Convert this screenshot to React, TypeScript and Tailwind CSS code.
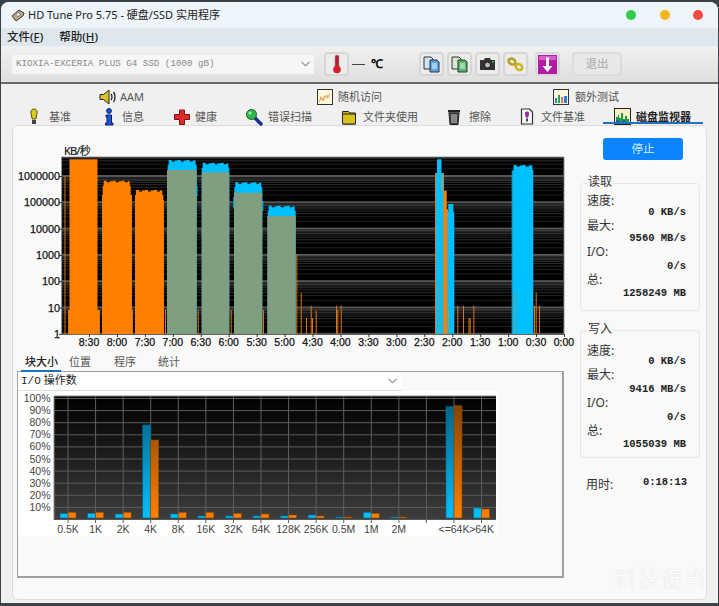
import React from 'react'

const cjk = '"Noto Sans", "Noto Sans CJK SC", sans-serif'

// ---- small icons, all drawn on a 16x16 grid ----
const Bulb = () => (
  <svg width="16" height="18" viewBox="0 0 16 18">
    <path d="M8 1c2.600 0 3.400 2 3 4.500L9.800 11H6.200L5 5.500C4.600 3 5.400 1 8 1z" fill="#d9c81e" stroke="#55500a" />
    <rect x="6" y="12" width="4" height="4" fill="#444" />
  </svg>
)
const Info = () => (
  <svg width="16" height="18" viewBox="0 0 16 18">
    <circle cx="8" cy="3" r="2.400" fill="#1c54d8" stroke="#0b1f60" />
    <path d="M5 7h5.500v8H12v2H4.500v-2H6V9H5z" fill="#1c54d8" stroke="#0b1f60" />
  </svg>
)
const Cross = () => (
  <svg width="16" height="16" viewBox="0 0 16 16">
    <path d="M5.500 1h5v4.500H15.500v5H10.500V15.500h-5V10.500H.5v-5h5z" fill="#df2a2a" stroke="#7a1414" />
  </svg>
)
const Magnifier = () => (
  <svg width="18" height="18" viewBox="0 0 18 18">
    <path d="M9 9l7 7" stroke="#1a2f8a" strokeWidth="3.500" strokeLinecap="round" />
    <circle cx="6.500" cy="6.500" r="5" fill="#2fb84a" stroke="#1b5f28" />
    <circle cx="5" cy="5" r="1.500" fill="#a8efb4" />
  </svg>
)
const Folder = () => (
  <svg width="16" height="16" viewBox="0 0 16 16">
    <path d="M1.500 4V2.500h6L9 4h5.500v11h-13z" fill="#cdb31a" stroke="#222" />
    <rect x="1.500" y="5" width="13" height="10" rx="1" fill="#d8c220" stroke="#222" />
  </svg>
)
const Trash = () => (
  <svg width="14" height="16" viewBox="0 0 14 16">
    <rect x="1" y="1" width="12" height="2.500" fill="#222" />
    <path d="M2 4h10l-1 11.500H3z" fill="#444" stroke="#222" />
    <path d="M5 5v9M7 5v9M9 5v9" stroke="#ccc" />
  </svg>
)
const FileBench = () => (
  <svg width="16" height="17" viewBox="0 0 16 17">
    <path d="M2.500 1h8l3 3v12h-11z" fill="#f6f6f6" stroke="#333" strokeWidth="1.200" />
    <path d="M8 3.500c1.700 0 2.300 1.300 2 2.800L9.100 9.800H6.900L6 6.300C5.700 4.800 6.300 3.500 8 3.500z" fill="#9c2aa8" />
    <rect x="7" y="10.500" width="2" height="3" fill="#444" />
  </svg>
)
const Speaker = () => (
  <svg width="18" height="16" viewBox="0 0 18 16">
    <path d="M1 5.500h3.500L10 1v14l-5.500-4.500H1z" fill="#d8c426" stroke="#222" />
    <path d="M12 5c1.300 1.500 1.300 4.500 0 6M14.500 3c2 2.700 2 7.300 0 10" fill="none" stroke="#222" strokeWidth="1.300" />
  </svg>
)
const ChartIcon = ({ alt }: { alt?: boolean }) => (
  <svg width="16" height="16" viewBox="0 0 16 16">
    <rect x=".5" y=".5" width="15" height="15" fill="#fdf8dc" stroke="#333" />
    {alt ? (
      <>
        <path d="M2 13l2-4 2 3 2-5 2 2 3-4" fill="none" stroke="#e9a020" />
        <path d="M3 8l3 2 3-4 4 3" fill="none" stroke="#e5554d" strokeDasharray="1 1" />
      </>
    ) : (
      <>
        <rect x="2" y="9" width="2" height="5" fill="#2f7de0" />
        <rect x="5" y="6" width="2" height="8" fill="#2aa84a" />
        <rect x="8" y="8" width="2" height="6" fill="#e5667a" />
        <rect x="11" y="7" width="3" height="7" fill="#2f7de0" />
      </>
    )}
  </svg>
)
const MonitorIcon = () => (
  <svg width="17" height="17" viewBox="0 0 17 17">
    <rect x=".5" y=".5" width="16" height="16" fill="#f6f1c4" stroke="#222" />
    <path d="M2 15V9h2v-2h1v3h2V5h2v6h2V8h2v3h2v4z" fill="#1f9a3c" />
    <path d="M2 15v-3h3v3zM9 15v-3h2v3z" fill="#1c54d8" />
  </svg>
)
const Thermo = () => (
  <svg width="10" height="20" viewBox="0 0 10 20">
    <rect x="3" y="1" width="4" height="13" rx="2" fill="#b5202a" stroke="#8d9aa5" strokeWidth=".6" />
    <circle cx="5" cy="15.500" r="3.800" fill="#d8202a" />
  </svg>
)
const Copy = ({ green }: { green?: boolean }) => (
  <svg width="17" height="17" viewBox="0 0 17 17">
    <path d="M1 1h7l2 2v10H1z" fill={green ? '#d8e8d0' : '#cfe2f6'} stroke="#333" />
    <path d="M7 4h7l2 2v10H7z" fill={green ? '#55b868' : '#5aa2e8'} stroke="#333" />
    <path d="M9 8h5M9 10h5M9 12h5" stroke="#eef6ff" />
  </svg>
)
const Camera = () => (
  <svg width="17" height="14" viewBox="0 0 17 14">
    <path d="M1 3h4l1-2h5l1 2h4v10H1z" fill="#333" />
    <circle cx="8.500" cy="8" r="3" fill="#bbb" stroke="#111" />
    <rect x="13" y="4" width="2" height="1.500" fill="#35c24f" />
  </svg>
)
const Chain = () => (
  <svg width="17" height="15" viewBox="0 0 17 15">
    <ellipse cx="5" cy="4.500" rx="3.500" ry="2.800" transform="rotate(35 5 4.500)" fill="none" stroke="#b3a01c" strokeWidth="2.600" />
    <ellipse cx="12" cy="10" rx="3.500" ry="2.800" transform="rotate(35 12 10)" fill="none" stroke="#c9b422" strokeWidth="2.600" />
  </svg>
)
const DownArrow = () => (
  <svg width="19" height="19" viewBox="0 0 19 19">
    <rect width="19" height="19" fill="#b21aa8" />
    <rect x="1" y="1" width="17" height="4" fill="#d65ecb" />
    <path d="M8 2.500h3V11h3.500l-5 6-5-6H8z" fill="#fff" />
  </svg>
)
const Chevron = () => (
  <svg width="9" height="6" viewBox="0 0 9 6">
    <path d="M.5.800l4 4 4-4" fill="none" stroke="#8a8a8a" strokeWidth="1.100" />
  </svg>
)

const ToolBtn = ({ children, className }: { children: React.ReactNode; className?: string }) => (
  <div className={`flex h-[24px] w-[25px] items-center justify-center rounded-[4px] border-2 border-[#d6d6d6] bg-[#ececec] ${className ?? ''}`}>
    {children}
  </div>
)

const Tab = ({ icon, label, gap, className, active }: { icon: React.ReactNode; label: string; gap: string; className: string; active?: boolean }) => (
  <div className={`flex shrink-0 items-center ${gap} ${className}`}>
    {icon}
    <span className={`whitespace-nowrap text-[11px] leading-[16px] ${active ? 'font-bold text-[#222]' : 'text-[#555]'}`}>{label}</span>
  </div>
)

// ---- disk monitor chart, drawn in page coordinates ----
const Y1M = 176
const DEC = 26.3
const BOTTOM = 334

const jag = (x0: number, x1: number, top: number) => {
  let d = `M${x0} ${BOTTOM}V${top + 5}H${x0 + 1}`
  let i = 0
  for (let x = x0 + 1; x < x1 - 1; x += 3) {
    d += `V${top + (i % 3 === 1 ? 1.500 : i % 3 === 2 ? 0.500 : 0)}H${Math.min(x + 3, x1 - 1)}`
    i++
  }
  return d + `V${top + 5}H${x1}V${BOTTOM}Z`
}

const xLabels = ['8:30', '8:00', '7:30', '7:00', '6:30', '6:00', '5:30', '5:00', '4:30', '4:00', '3:30', '3:00', '2:30', '2:00', '1:30', '1:00', '0:30', '0:00']
const yLabels = ['1000000', '100000', '10000', '1000', '100', '10', '1']
const spikes: [number, number][] = [
  [64.5, 176], [68, 310], [99, 310], [132, 310], [165, 310], [197.7, 310], [230.7, 310], [263, 310], [296.300, 254],
  [300.7, 292.7], [306, 318], [310.7, 305.7], [312, 318], [315.7, 310.7], [336, 305.7], [337.3, 310], [340.7, 305.7],
  [457.3, 305.7], [463, 305.7], [468.5, 318], [469.7, 318], [473.3, 305.7], [534, 305.7], [535.7, 292.7], [539, 305.7],
]

const MonitorChart = () => {
  const minors: { y: number; c: string }[] = []
  for (let d = 0; d < 7; d++) {
    for (let k = 2; k < 10; k++) {
      const y = BOTTOM - d * DEC - Math.log10(k) * DEC
      if (y > 157) minors.push({ y, c: k > 6 ? '#3a3a3a' : k > 3 ? '#2c2c2c' : '#222222' })
    }
  }
  return (
    <svg width="560" height="211" viewBox="18 141 560 211" className="block" fontFamily='"Liberation Sans", sans-serif'>
      <rect x="62" y="157" width="502" height="177" fill="#000" />
      <path d="M62 157H564V334" fill="none" stroke="#9a9a9a" />
      <path d="M62 157V334H564" fill="none" stroke="#222" />
      {minors.map((m, i) => (
        <rect key={i} x="62" y={m.y} width="502" height="1" fill={m.c} />
      ))}
      {yLabels.map((_, i) => (
        <rect key={i} x="62" y={Y1M + i * DEC - 1} width="502" height="2" fill="#565656" />
      ))}

      {/* orange read bars */}
      <rect x="68" y="310" width="31" height="24" fill="#ff8000" />
      <rect x="69.500" y="159.300" width="28" height="175" fill="#ff8000" />
      <path d={jag(102.7, 130.7, 180.7)} fill="#ff8000" />
      <rect x="102" y="195" width="30" height="139" fill="#ff8000" />
      <path d={jag(135, 163.3, 190)} fill="#ff8000" />
      <rect x="135" y="200" width="29" height="134" fill="#ff8000" />

      {/* blue + mixed bars */}
      <path d={jag(167.7, 196.7, 160)} fill="#00bfff" />
      <path d={jag(201.7, 229.3, 162.7)} fill="#00bfff" />
      <path d={jag(234.3, 262.3, 182.3)} fill="#00bfff" />
      <path d={jag(267.7, 295.7, 205.7)} fill="#00bfff" />
      <rect x="167" y="170" width="29.700" height="164" fill="#7f9f80" />
      <rect x="201.700" y="172.300" width="27.600" height="161.700" fill="#7f9f80" />
      <rect x="234" y="192.700" width="28.300" height="141.300" fill="#7f9f80" />
      <rect x="267.300" y="216" width="28.400" height="118" fill="#7f9f80" />
      <rect x="196.500" y="186" width="1" height="10" fill="#00bfff" />
      <rect x="233.300" y="197" width="1" height="11" fill="#00bfff" />
      <rect x="262.300" y="201" width="1" height="10" fill="#00bfff" />

      {/* 2:00 burst */}
      <rect x="435" y="173" width="1" height="161" fill="#d98028" />
      <rect x="436" y="173" width="8" height="161" fill="#00bfff" />
      <rect x="437" y="159.300" width="4.500" height="20" fill="#00bfff" />
      <rect x="441.500" y="173" width="1.500" height="18" fill="#e08a30" />
      <rect x="443.300" y="190.700" width="3.400" height="143.300" fill="#ff8000" />
      <rect x="444" y="209.300" width="4" height="124.700" fill="#ff8000" />
      <rect x="447.300" y="212" width="7" height="122" fill="#00bfff" />
      <rect x="448.300" y="204" width="5" height="10" fill="#00bfff" />
      <rect x="438" y="283" width="1" height="51" fill="#7f9f80" />
      <rect x="448" y="310" width="1" height="24" fill="#7f9f80" />

      {/* 1:00-0:30 block */}
      <path d={jag(512.6, 533.3, 165)} fill="#00bfff" />
      <rect x="511.700" y="170.700" width="1" height="163" fill="#00bfff" />
      <rect x="514" y="292.700" width="1" height="41" fill="#7f9f80" />

      {spikes.map(([x, top], i) => (
        <rect key={i} x={x} y={top} width="1" height={BOTTOM - top} fill="#d9760c" />
      ))}

      {/* axes */}
      {yLabels.map((l, i) => (
        <g key={l}>
          <rect x="59" y={Y1M + i * DEC} width="3" height="1" fill="#333" />
          <text x="60" y={Y1M + i * DEC + 4} textAnchor="end" fontSize="10.800" fill="#111" stroke="#111" strokeWidth=".25">{l}</text>
        </g>
      ))}
      {xLabels.map((l, i) => (
        <g key={l}>
          <rect x={89 + i * 27.94} y="334" width="1" height="3" fill="#333" />
          <text x={89 + i * 27.94} y="346" textAnchor="middle" fontSize="10.500" fill="#111" stroke="#111" strokeWidth=".25">{l}</text>
        </g>
      ))}
      <text x="64" y="155" fontSize="11" fill="#111" stroke="#111" strokeWidth=".15" letterSpacing="-.8" fontFamily={cjk}>KB/秒</text>
    </svg>
  )
}

// ---- block size histogram ----
const sizes: [string, number, number][] = [
  ['0.5K', 513.3, 512.3], ['1K', 513.3, 512.3], ['2K', 514, 512.3], ['4K', 425, 440],
  ['8K', 514, 512.3], ['16K', 516, 512.3], ['32K', 516, 513.3], ['64K', 516, 514],
  ['128K', 516, 515], ['256K', 515, 516], ['0.5M', 517, 517], ['1M', 512.3, 513.3],
  ['2M', 517, 517], ['', 518, 518], ['<=64K', 406.7, 405.7], ['>64K', 508, 509],
]

const BlockChart = () => (
  <svg width="479" height="145" viewBox="18 391 479 145" className="block bg-white" fontFamily='"Liberation Sans", sans-serif'>
    <defs>
      <linearGradient id="plotBg" x1="0" y1="0" x2="0" y2="1">
        <stop offset="0" stopColor="#000" />
        <stop offset="1" stopColor="#3d3d3d" />
      </linearGradient>
      <linearGradient id="blueBar" gradientUnits="userSpaceOnUse" x1="0" y1="400" x2="0" y2="518">
        <stop offset="0" stopColor="#005f80" />
        <stop offset="1" stopColor="#00bfff" />
      </linearGradient>
      <linearGradient id="orangeBar" gradientUnits="userSpaceOnUse" x1="0" y1="400" x2="0" y2="518">
        <stop offset="0" stopColor="#804000" />
        <stop offset="1" stopColor="#ff8000" />
      </linearGradient>
    </defs>
    <rect x="54" y="396" width="442" height="124" fill="url(#plotBg)" />
    <path d="M54 396H496M54 396V520" stroke="#8a8a8a" fill="none" />
    {Array.from({ length: 10 }, (_, i) => (
      <g key={i}>
        <rect x="54" y={398 + i * 12.1} width="442" height="1" fill="#5c5c5c" />
        <text x="50.500" y={402 + i * 12.1} textAnchor="end" fontSize="10.500" fill="#444">{100 - i * 10}%</text>
      </g>
    ))}
    {sizes.map(([l, b, o], i) => {
      const x = 68 + i * 27.57
      return (
        <g key={i}>
          <rect x={x - 0.5} y="396" width="1" height="127" fill="#5f5f5f" />
          {l && (
            <>
              <rect x={x - 8} y={b} width="8" height={518 - b} fill="url(#blueBar)" stroke="#00668a" strokeWidth=".6" />
              <rect x={x} y={o} width="8" height={518 - o} fill="url(#orangeBar)" stroke="#8a4500" strokeWidth=".6" />
              <text x={x} y="533" textAnchor="middle" fontSize="10.500" fill="#444">{l}</text>
            </>
          )}
        </g>
      )
    })}
    <rect x="54" y="519" width="442" height="1" fill="#555" />
  </svg>
)

const Stat = ({ label, value, shift }: { label: string; value: string; shift: string }) => (
  <>
    <div className="h-[14px] text-[12px] leading-[14px] text-[#333]">{label}</div>
    <div className={`h-[14px] whitespace-pre pr-[13px] text-right font-['Liberation_Mono',monospace] text-[10.500px] font-bold leading-[14px] text-[#222] ${shift}`}>{value}</div>
  </>
)

const Group = ({ title, rows, className }: { title: string; rows: [string, string, string][]; className: string }) => (
  <div className={`relative h-[128px] w-[120px] rounded-[4px] border border-[#e6e6e6] pl-[6px] ${className}`}>
    <span className="absolute left-[6px] top-[-11px] bg-[#f9f9f9] px-[1px] text-[12px] leading-[18px] text-[#333]">{title}</span>
    {rows.map(([l, v, s]) => (
      <Stat key={l} label={l} value={v} shift={s} />
    ))}
  </div>
)

export default function App() {
  return (
    <div className="h-[606px] w-[719px] overflow-hidden bg-[#3b4146] pl-[1px] pt-[2px]" style={{ fontFamily: cjk }}>
      <div className="relative h-[601px] w-[717px] overflow-hidden rounded-t-[8px] bg-[#f0f0f0]">
        {/* title bar */}
        <div className="flex h-[26px] items-center bg-[#eef5fa] pl-[10px] pr-[15px]">
          <svg width="14" height="13" viewBox="0 0 14 13" className="mr-[3px]">
            <path d="M1 7l7-6 5 3-1 3-7 5z" fill="#b9aa80" stroke="#3a3a3a" />
            <circle cx="7" cy="5.500" r="2" fill="#e8e8e8" stroke="#555" strokeWidth=".6" />
          </svg>
          <span className="text-[11px] leading-[16px] text-[#222]">HD Tune Pro 5.75 - 硬盘/SSD 实用程序</span>
          <div className="ml-auto flex gap-[23.500px]">
            <span className="h-[10px] w-[10px] rounded-full bg-[#2ecc47]" />
            <span className="h-[10px] w-[10px] rounded-full bg-[#f6b619]" />
            <span className="h-[10px] w-[10px] rounded-full bg-[#f5483f]" />
          </div>
        </div>
        {/* menu */}
        <div className="flex h-[18px] items-center gap-[16px] bg-[#dfe7ee] pl-[6px] text-[11.500px] font-medium leading-[16px] text-[#222]">
          <span>文件(<span className="underline">F</span>)</span>
          <span>帮助(<span className="underline">H</span>)</span>
        </div>
        {/* toolbar */}
        <div className="flex h-[38px] items-center border-b-2 border-[#6a6a6a] bg-gradient-to-b from-[#f1f1f1] to-[#dfdfdf] pl-[11px]">
          <div className="flex h-[19px] w-[302px] items-center justify-between bg-[#f6f6f6] pl-[4px] pr-[4px]">
            <span className="font-['Liberation_Mono',monospace] text-[9.200px] text-[#8a8a8a]">KIOXIA-EXCERIA PLUS G4 SSD (1000 gB)</span>
            <Chevron />
          </div>
          <ToolBtn className="ml-[10px]"><Thermo /></ToolBtn>
          <div className="ml-[3px] h-[1px] w-[13px] bg-[#444]" />
          <span className="ml-[6px] w-[14px] font-['Liberation_Serif',serif] text-[12px] font-bold text-black">℃</span>
          <ToolBtn className="ml-[34px]"><Copy /></ToolBtn>
          <ToolBtn className="ml-[3px]"><Copy green /></ToolBtn>
          <ToolBtn className="ml-[3px]"><Camera /></ToolBtn>
          <ToolBtn className="ml-[3px]"><Chain /></ToolBtn>
          <ToolBtn className="ml-[7px]"><DownArrow /></ToolBtn>
          <div className="ml-[12px] flex h-[24px] w-[50px] items-center justify-center rounded-[4px] border-2 border-[#dcdcdc] bg-[#e8e8e8] text-[11.500px] text-[#a8a8a8]">退出</div>
        </div>
        {/* tabs */}
        <div className="h-[21px] pt-[5px]">
          <div className="flex h-[16px] items-center">
            <Tab icon={<Speaker />} label="AAM" gap="gap-[3px]" className="ml-[98px]" />
            <Tab icon={<ChartIcon alt />} label="随机访问" gap="gap-[5px]" className="ml-[173px]" />
            <Tab icon={<ChartIcon />} label="额外测试" gap="gap-[6px]" className="ml-[171px]" />
          </div>
        </div>
        <div className="relative flex h-[20px] items-center pt-[3px]">
          <Tab icon={<Bulb />} label="基准" gap="gap-[7px]" className="ml-[25px]" />
          <Tab icon={<Info />} label="信息" gap="gap-[5px]" className="ml-[30px]" />
          <Tab icon={<Cross />} label="健康" gap="gap-[5px]" className="ml-[30px]" />
          <Tab icon={<Magnifier />} label="错误扫描" gap="gap-[5px]" className="ml-[28px]" />
          <Tab icon={<Folder />} label="文件夹使用" gap="gap-[6px]" className="ml-[29px]" />
          <Tab icon={<Trash />} label="擦除" gap="gap-[8px]" className="ml-[29px]" />
          <Tab icon={<FileBench />} label="文件基准" gap="gap-[6px]" className="ml-[28px]" />
          <Tab icon={<MonitorIcon />} label="磁盘监视器" gap="gap-[5px]" className="ml-[29px]" active />
          <div className="absolute bottom-[1px] left-[602px] h-[2px] w-[100px] bg-[#1f70c1]" />
        </div>
        {/* main panel */}
        <div className="ml-[11px] flex h-[475px] w-[695px] rounded-[6px] border border-[#dcdcdc] bg-[#f9f9f9]">
          <div className="w-[566px] pl-[5px] pt-[15px]">
            <MonitorChart />
            <div className="flex h-[19px] items-center pl-[7px] pt-[1px] text-[11px] leading-[16px] text-[#555]">
              <span className="relative w-[44px] font-medium text-[#222]">
                块大小
                <span className="absolute bottom-[-2px] left-[-4px] h-[2px] w-[40px] bg-[#1f70c1]" />
              </span>
              <span className="w-[45px]">位置</span>
              <span className="w-[44px]">程序</span>
              <span>统计</span>
            </div>
            <div className="-ml-[1px] h-[207px] w-[547px] border-b-2 border-l border-r-2 border-t border-[#a0a0a0] bg-[#f9f9f9]">
              <div className="flex h-[19px] w-[383px] items-center justify-between border-b border-[#dfdfdf] bg-white pl-[3px] pr-[4px] text-[11px] text-[#222]">
                <span><span className="font-['Liberation_Mono',monospace]">I/O</span> 操作数</span>
                <Chevron />
              </div>
              <BlockChart />
            </div>
          </div>
          {/* right column */}
          <div className="flex-1 pl-[1px] pt-[12px]">
            <div className="ml-[23px] flex h-[22px] w-[80px] items-center justify-center rounded-[3px] bg-[#0a84ff] text-[11.500px] text-[#d6ecff]">停止</div>
            <Group
              title="读取"
              className="mt-[23px] pt-[10px]"
              rows={[
                ['速度:', '0 KB/s', 'mt-[-3px]'],
                ['最大:', '9560 MB/s', 'mt-[-2px]'],
                ['I/O:', '0/s', 'mt-0'],
                ['总:', '1258249 MB', 'mt-[-1px]'],
              ]}
            />
            <Group
              title="写入"
              className="mt-[19px] pt-[13px]"
              rows={[
                ['速度:', '0 KB/s', 'mt-[-4px]'],
                ['最大:', '9416 MB/s', 'mt-0'],
                ['I/O:', '0/s', 'mt-0'],
                ['总:', '1055039 MB', 'mt-[-1px]'],
              ]}
            />
            <div className="mt-[17px] flex w-[120px] items-center justify-between pl-[6px] pr-[13px]">
              <span className="text-[12px] leading-[16px] text-[#333]">用时:</span>
              <span className="mb-[4px] font-['Liberation_Mono',monospace] text-[10.500px] font-bold text-[#222]">0:18:13</span>
            </div>
          </div>
        </div>
        {/* watermark */}
        <span className="absolute left-[614px] top-[562px] text-[22px] font-light leading-[28px] tracking-[1px] text-[#fdfdfd] [text-shadow:0_0_1px_#cfcfcf]">科技便当</span>
      </div>
    </div>
  )
}
